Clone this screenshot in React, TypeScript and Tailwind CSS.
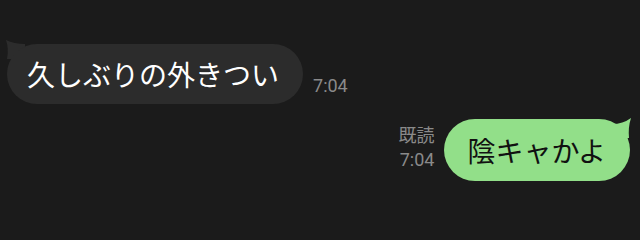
const jp = "font-['Noto_Sans_CJK_JP','Noto_Sans',sans-serif]"
const meta = "font-['Roboto','Noto_Sans_CJK_JP',sans-serif] text-[18px] leading-[25px] text-[#8a8a8a]"

export default function App() {
  return (
    <div className="flex h-[240px] w-[640px] flex-col bg-[#1b1b1b]">
      {/* 受信 */}
      <div className="flex items-end gap-[10px] pl-[7px] pt-[44px]">
        <div className="relative">
          <svg className="absolute -left-[2px] -top-[5px]" width="22" height="22" viewBox="0 0 22 22">
            <path d="M1 1 Q9 5 20 5 L20 20 L2 20 Q4 10 1 1 Z" fill="#2c2c2c" />
          </svg>
          <div className={`relative h-[60px] rounded-[30px] bg-[#2c2c2c] pl-[20px] pr-[24px] py-[10px] text-[28px] leading-[40px] text-white ${jp}`}>
            久しぶりの外きつい
          </div>
        </div>
        <span className={`${meta} mb-[6px]`}>7:04</span>
      </div>

      {/* 送信 */}
      <div className="mt-[15px] flex items-end justify-end gap-[10px] pr-[10px]">
        <div className={`mb-[9px] flex flex-col items-end ${meta}`}>
          <span className={jp}>既読</span>
          <span>7:04</span>
        </div>
        <div className="relative">
          <svg className="absolute -right-[2px] -top-[2px]" width="22" height="22" viewBox="0 0 22 22">
            <path d="M21 1 Q13 7 2 7 L2 21 L19 21 Q18 10 21 1 Z" fill="#92df89" />
          </svg>
          <div className={`relative h-[62px] rounded-[31px] bg-[#92df89] pl-[23px] pr-[24px] py-[11px] text-[28px] leading-[40px] text-[#111111] ${jp}`}>
            陰キャかよ
          </div>
        </div>
      </div>
    </div>
  )
}
